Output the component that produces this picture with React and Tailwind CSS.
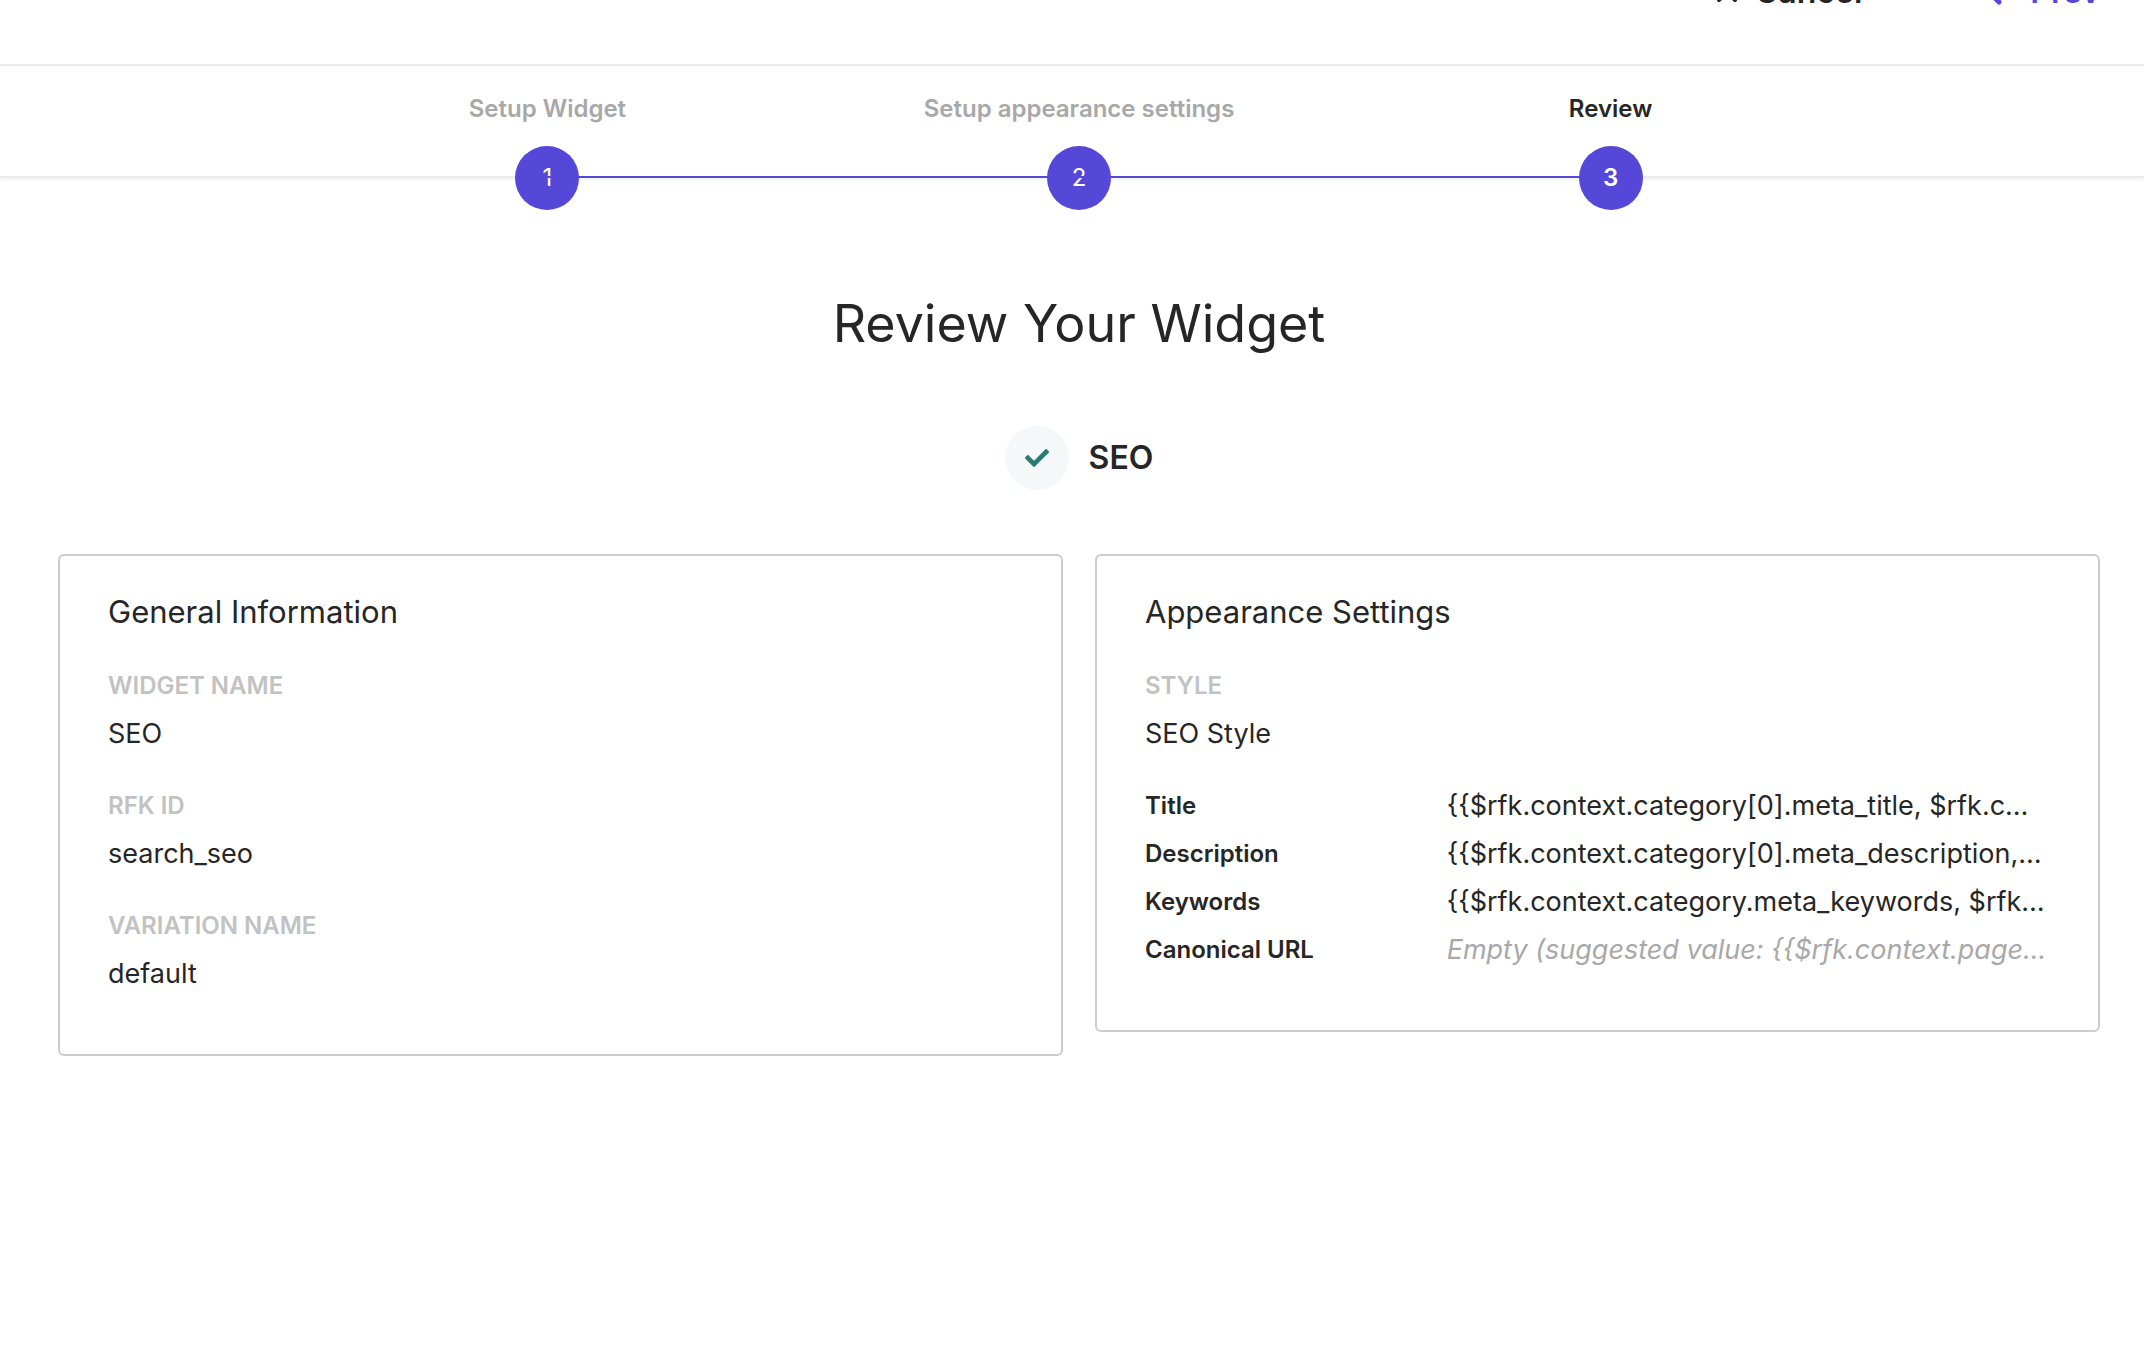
import { FaCheck } from "react-icons/fa";
import { X, ChevronLeft } from "lucide-react";

const steps = ["Setup Widget", "Setup appearance settings", "Review"];

const general = [
  ["Widget name", "SEO"],
  ["RFK ID", "search_seo"],
  ["Variation name", "default"],
];

const appearance = [
  ["Title", "{{$rfk.context.category[0].meta_title, $rfk.c…"],
  ["Description", "{{$rfk.context.category[0].meta_description,…"],
  ["Keywords", "{{$rfk.context.category.meta_keywords, $rfk…"],
  ["Canonical URL", "Empty (suggested value: {{$rfk.context.page…", true],
];

function Field({ label, value }) {
  return (
    <div className="mb-6">
      <dt className="text-2xl leading-[48px] font-semibold uppercase text-[#c2c2c2]">{label}</dt>
      <dd className="text-[27px] leading-[48px]">{value}</dd>
    </div>
  );
}

function Card({ title, children }) {
  return (
    <section className="flex-1 min-w-0 rounded-md border-2 border-[#cdcdcd] px-12 pt-8 pb-8">
      <h2 className="mb-[26px] text-[31px] leading-[48px]">{title}</h2>
      {children}
    </section>
  );
}

function Step({ index, label }) {
  const first = index === 0;
  const active = index === steps.length - 1;
  return (
    <li className="relative flex flex-col items-center">
      {!first && <span className="absolute right-1/2 bottom-8 h-0.5 w-full bg-[#5548d9]" />}
      <span className={active ? "text-2xl leading-8 font-semibold" : "text-2xl leading-8 font-semibold text-[#a8a8a8]"}>
        {label}
      </span>
      <span
        className={
          active
            ? "relative mt-[21px] grid size-16 place-items-center rounded-full bg-[#5548d9] text-2xl font-semibold text-white"
            : "relative mt-[21px] grid size-16 place-items-center rounded-full bg-[#5548d9] text-2xl text-white"
        }
      >
        {index + 1}
      </span>
    </li>
  );
}

export default function App() {
  return (
    <div className="min-h-screen bg-white font-['Inter',sans-serif] text-[#262626]">
      <header className="flex h-[66px] items-start justify-end gap-28 overflow-hidden border-b-2 border-[#ebebeb] pr-11">
        <button type="button" className="-mt-7 flex items-center gap-3 text-[32px] leading-10 font-semibold">
          <X className="size-8" strokeWidth={3} />
          Cancel
        </button>
        <button type="button" className="-mt-7 flex items-center gap-4 text-[32px] leading-10 font-semibold text-[#5548d9]">
          <ChevronLeft className="size-10" strokeWidth={3} />
          Prev
        </button>
      </header>

      <nav aria-label="Progress" className="h-28 border-b-2 border-[#ebebeb] pt-[27px] pr-11 pl-[58px] shadow-[0_2px_4px_rgba(0,0,0,0.06)]">
        <ol className="mx-auto grid w-[78.1%] grid-cols-3">
          {steps.map((label, i) => (
            <Step key={label} index={i} label={label} />
          ))}
        </ol>
      </nav>

      <main className="pr-11 pl-[58px]">
        <h1 className="pt-28 text-center text-[52px] leading-[68px]">Review Your Widget</h1>
        <div className="mt-[68px] flex items-center justify-center gap-5">
          <span className="grid size-16 place-items-center rounded-full bg-[#f4f8f9]">
            <FaCheck className="size-6 text-[#2b7b73]" />
          </span>
          <span className="text-[32px] leading-10 font-semibold">SEO</span>
        </div>

        <div className="mt-16 flex items-start gap-8">
          <Card title="General Information">
            <dl>
              {general.map(([label, value]) => (
                <Field key={label} label={label} value={value} />
              ))}
            </dl>
          </Card>
          <Card title="Appearance Settings">
            <dl>
              <Field label="Style" value="SEO Style" />
            </dl>
            <dl className="mb-6">
              {appearance.map(([label, value, empty]) => (
                <div key={label} className="grid grid-cols-3">
                  <dt className="text-2xl leading-[48px] font-semibold">{label}</dt>
                  <dd
                    className={
                      empty
                        ? "col-span-2 text-[27px] leading-[48px] whitespace-nowrap text-[#a8a8a8] italic"
                        : "col-span-2 text-[27px] leading-[48px] whitespace-nowrap"
                    }
                  >
                    {value}
                  </dd>
                </div>
              ))}
            </dl>
          </Card>
        </div>
      </main>
    </div>
  );
}
